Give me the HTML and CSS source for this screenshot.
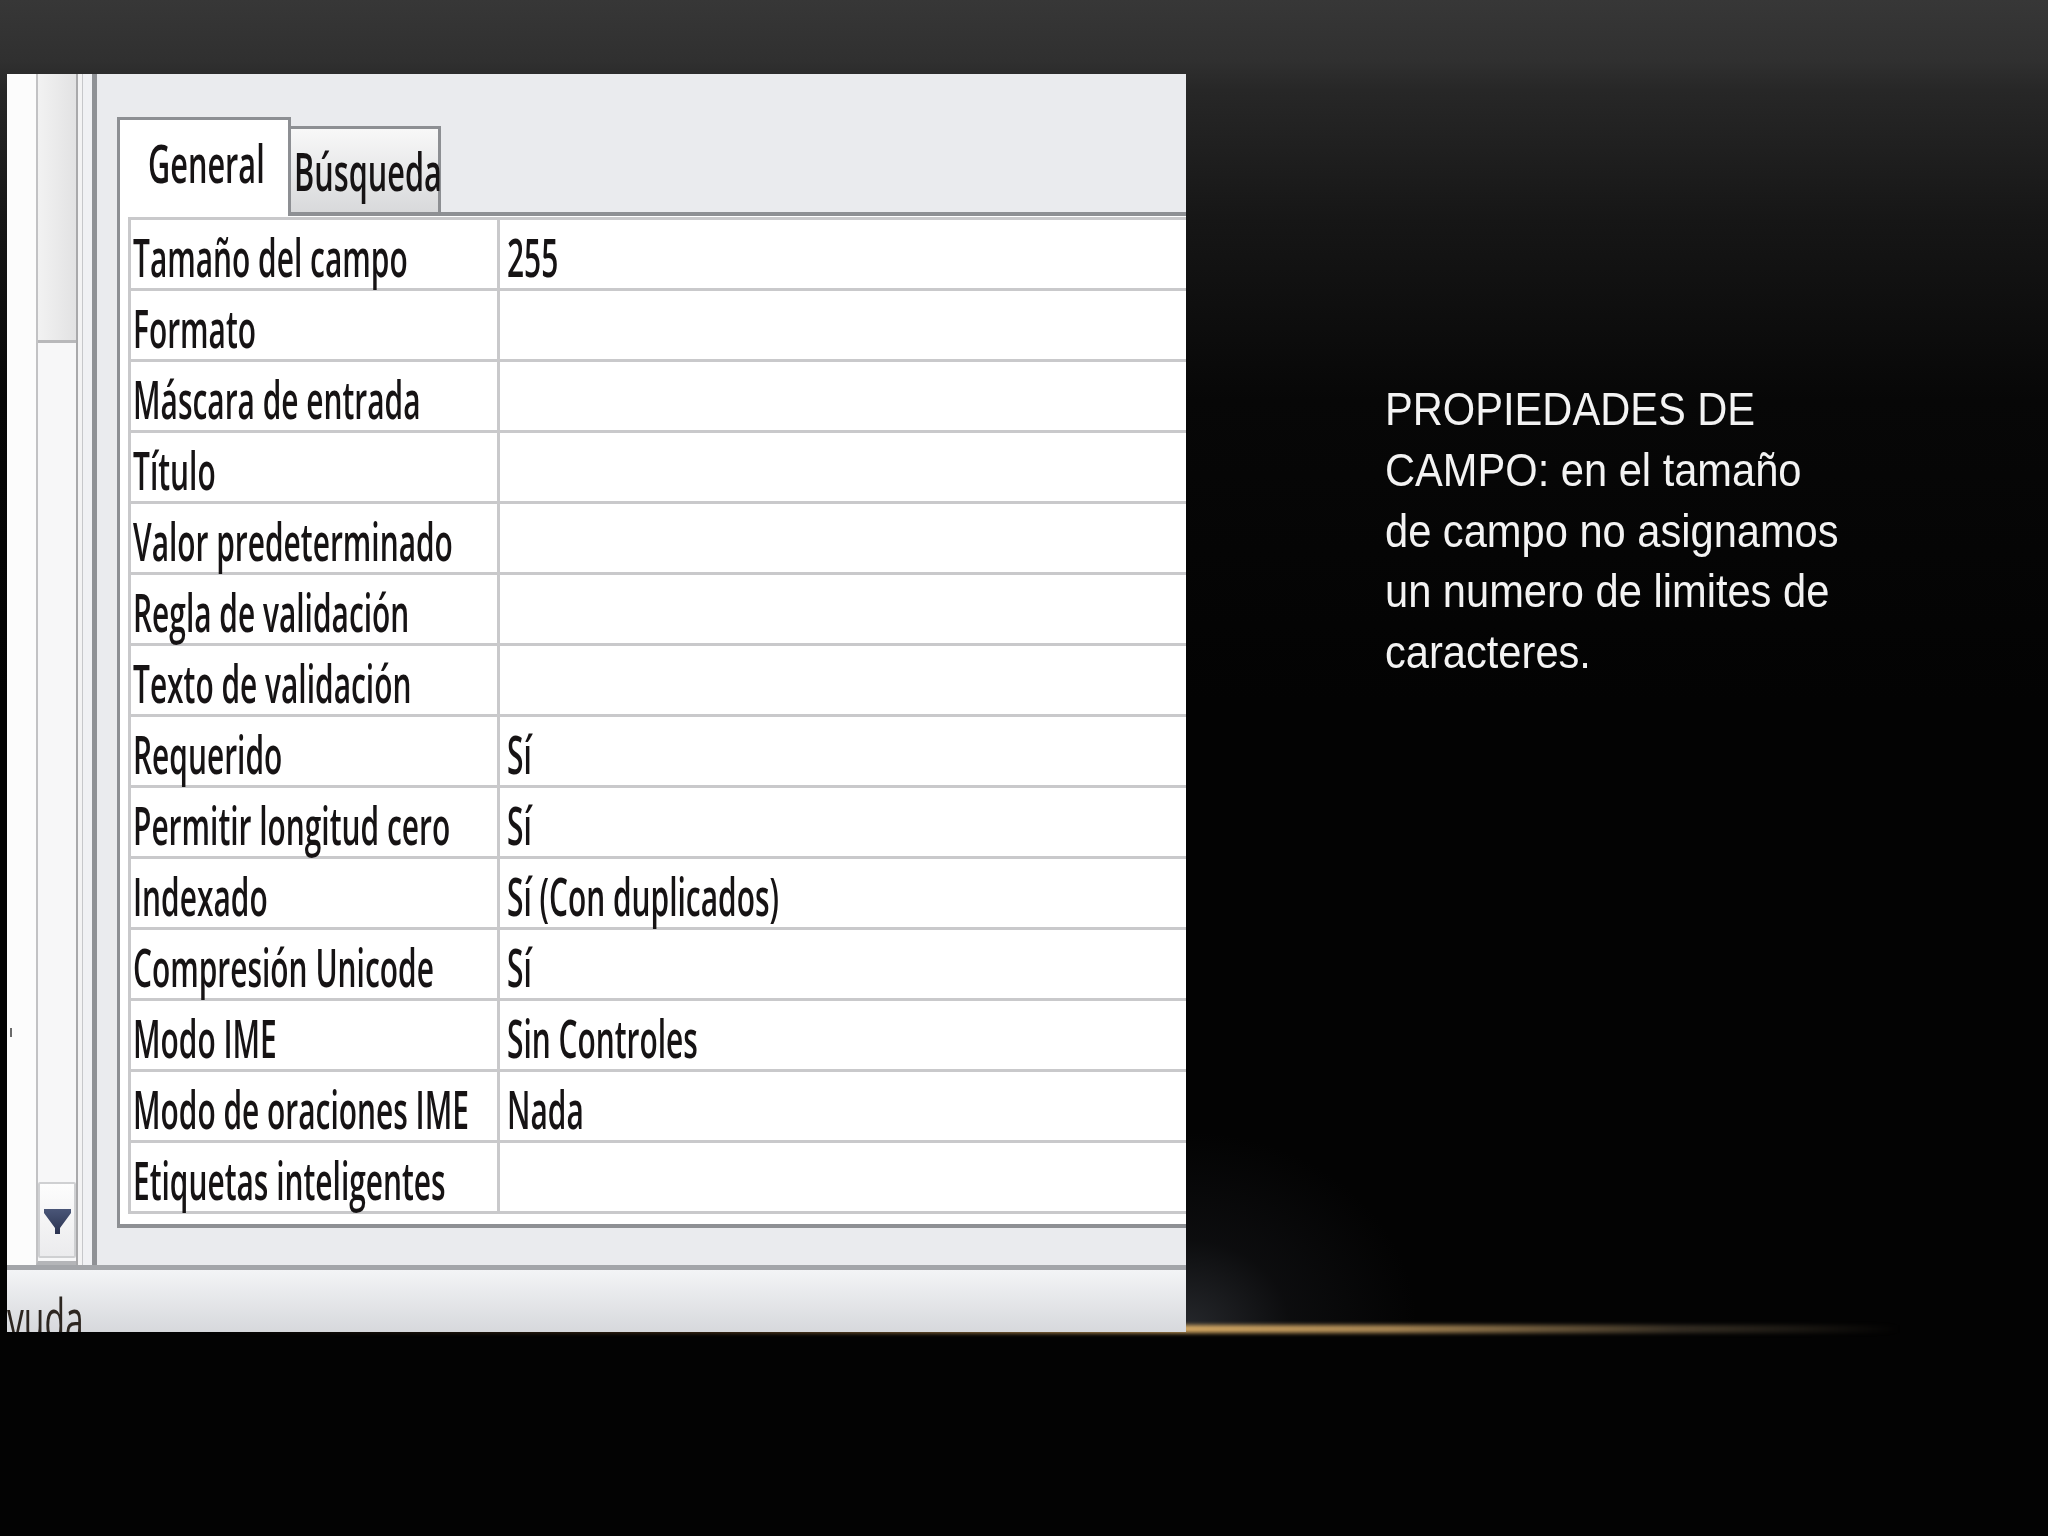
FILE: index.html
```html
<!DOCTYPE html>
<html lang="es">
<head>
<meta charset="utf-8">
<title>Propiedades de campo</title>
<link rel="stylesheet" href="styles.css">
</head>
<body>
<div class="slide">
  <div class="haze"></div>
  <div class="glow"></div>
  <div class="shot">
    <div class="main">
      <div class="gutter"><span class="tick"></span></div>
      <div class="vscroll">
        <div class="thumb"></div>
        <div class="track"></div>
        <div class="btn-down">
          <svg width="27" height="25" viewBox="0 0 27 25"><defs><linearGradient id="ag" x1="0" y1="0" x2="0" y2="1"><stop offset="0" stop-color="#4a5678"/><stop offset="1" stop-color="#2a3250"/></linearGradient></defs><polygon points="0,0 27,0 27,4 16,19 16,25 11,25 11,19 0,4" fill="url(#ag)"/></svg>
        </div>
      </div>
      <div class="divider"></div>
      <div class="content">
        <div class="tabstrip">
          <div class="tab active"><span class="t">General</span></div>
          <div class="tab inactive"><span class="t">Búsqueda</span></div>
          <div class="tabline"></div>
        </div>
        <div class="tabpanel">
          <div class="grid">
            <div class="cell lab"><span class="t">Tamaño del campo</span></div><div class="cell val"><span class="t">255</span></div>
            <div class="cell lab"><span class="t">Formato</span></div><div class="cell val"></div>
            <div class="cell lab"><span class="t">Máscara de entrada</span></div><div class="cell val"></div>
            <div class="cell lab"><span class="t">Título</span></div><div class="cell val"></div>
            <div class="cell lab"><span class="t">Valor predeterminado</span></div><div class="cell val"></div>
            <div class="cell lab"><span class="t">Regla de validación</span></div><div class="cell val"></div>
            <div class="cell lab"><span class="t">Texto de validación</span></div><div class="cell val"></div>
            <div class="cell lab"><span class="t">Requerido</span></div><div class="cell val"><span class="t">Sí</span></div>
            <div class="cell lab"><span class="t">Permitir longitud cero</span></div><div class="cell val"><span class="t">Sí</span></div>
            <div class="cell lab"><span class="t">Indexado</span></div><div class="cell val"><span class="t">Sí (Con duplicados)</span></div>
            <div class="cell lab"><span class="t">Compresión Unicode</span></div><div class="cell val"><span class="t">Sí</span></div>
            <div class="cell lab"><span class="t">Modo IME</span></div><div class="cell val"><span class="t">Sin Controles</span></div>
            <div class="cell lab"><span class="t">Modo de oraciones IME</span></div><div class="cell val"><span class="t">Nada</span></div>
            <div class="cell lab"><span class="t">Etiquetas inteligentes</span></div><div class="cell val"></div>
          </div>
        </div>
      </div>
    </div>
    <div class="status"><span class="t">yuda.</span></div>
  </div>
  <div class="caption">PROPIEDADES DE<br>CAMPO: en el tamaño<br>de campo no asignamos<br>un numero de limites de<br>caracteres.</div>
</div>
</body>
</html>
```
FILE: styles.css
```css
html, body {
  margin: 0;
  padding: 0;
  background: #030303;
}

.slide {
  position: relative;
  width: 2048px;
  height: 1536px;
  overflow: hidden;
  box-sizing: border-box;
  padding: 74px 0 0 7px;
  display: flex;
  align-items: flex-start;
  background: linear-gradient(to bottom, #373737 0px, #303030 60px, #272727 90px, #161616 220px, #070707 400px, #030303 700px, #030303 100%);
}

.haze {
  position: absolute;
  left: 1186px;
  top: 1110px;
  width: 420px;
  height: 218px;
  background: radial-gradient(ellipse 55% 90% at 0% 100%, rgba(72, 76, 84, 0.5) 0%, rgba(40, 42, 48, 0.25) 45%, rgba(0, 0, 0, 0) 100%);
  z-index: 0;
}

.glow {
  position: absolute;
  left: 200px;
  top: 1325px;
  width: 1700px;
  height: 8px;
  background: linear-gradient(to right, rgba(90, 60, 30, 0) 0%, rgba(120, 82, 42, 0.6) 30%, rgba(215, 170, 100, 1) 58%, rgba(200, 160, 100, 0.85) 70%, rgba(130, 112, 85, 0.4) 87%, rgba(80, 80, 80, 0) 100%);
  filter: blur(2px);
  z-index: 0;
}

.shot {
  position: relative;
  z-index: 1;
  width: 1179px;
  height: 1258px;
  flex: none;
  display: flex;
  flex-direction: column;
  overflow: hidden;
  background: #eaebee;
}

.main {
  height: 1191px;
  display: flex;
  flex: none;
}

.gutter {
  width: 29px;
  flex: none;
  background: #fcfcfc;
}

.tick {
  display: block;
  width: 2px;
  height: 9px;
  margin: 954px 0 0 3px;
  background: #6a6a6a;
}

.vscroll {
  width: 40px;
  flex: none;
  box-sizing: border-box;
  border-left: 2px solid #c2c2c4;
  border-bottom: 4px solid #b4b5b8;
  background: #f7f7f8;
  display: flex;
  flex-direction: column;
}

.thumb {
  height: 269px;
  box-sizing: border-box;
  border-bottom: 3px solid #b8b8ba;
  background: linear-gradient(to right, #f2f2f2, #e2e2e3);
}

.track {
  flex: 1;
}

.btn-down {
  height: 76px;
  margin-bottom: 3px;
  box-sizing: border-box;
  border: 2px solid #cfd0d2;
  border-radius: 2px;
  background: linear-gradient(to bottom, #fdfdfd, #ebebed);
  display: flex;
  align-items: center;
  justify-content: center;
}

.btn-down svg {
  display: block;
  margin-top: 2px;
}

.divider {
  width: 21px;
  flex: none;
  background: linear-gradient(to right, #a9a9ab 0px, #a9a9ab 2px, #f3f3f4 2px, #f3f3f4 6px, #c6c7ca 6px, #c6c7ca 7px, #f0f1f4 7px, #f0f1f4 16px, #8f9195 16px, #8f9195 21px);
}

.content {
  flex: 1;
  min-width: 0;
  padding: 43px 0 0 20px;
  background: #eaebee;
}

.t {
  display: inline-block;
  font-family: "Open Sans", "Noto Sans", sans-serif;
  font-weight: 600;
  font-size: 52px;
  line-height: normal;
  color: #161314;
  white-space: nowrap;
  transform: scaleX(0.575);
  transform-origin: 0 0;
}

.tabstrip {
  display: flex;
  align-items: flex-end;
  height: 99px;
}

.tab {
  box-sizing: border-box;
  flex: none;
}

.tab.active {
  width: 174px;
  height: 99px;
  border: 3px solid #8d8f93;
  border-bottom: 0;
  background: #ffffff;
  padding: 7px 0 0 28px;
}

.tab.active .t {
  transform: scaleX(0.59);
}

.tab.inactive {
  width: 150px;
  height: 90px;
  border-top: 3px solid #8d8f93;
  border-right: 3px solid #8d8f93;
  border-bottom: 4px solid #8e9094;
  background: linear-gradient(to bottom, #f8f8f8, #d8d9db);
  padding: 6px 0 0 3px;
}

.tab.inactive .t {
  transform: scaleX(0.59);
}

.tabline {
  flex: 1;
  height: 4px;
  background: #8e9094;
}

.tabpanel {
  background: #ffffff;
  border-left: 3px solid #8d8f93;
  border-bottom: 4px solid #8e9094;
  padding: 1px 0 10px 8px;
}

.grid {
  display: grid;
  grid-template-columns: 369px 1fr;
  border-top: 3px solid #c9c9cb;
  border-left: 3px solid #c9c9cb;
}

.cell {
  height: 68px;
  box-sizing: content-box;
  border-bottom: 3px solid #c9c9cb;
  white-space: nowrap;
  display: flex;
  align-items: flex-start;
}

.cell .t {
  margin-top: 1px;
}

.lab {
  border-right: 3px solid #c9c9cb;
  padding-left: 2px;
}

.val {
  padding-left: 7px;
}

.status {
  flex: none;
  height: 62px;
  border-top: 5px solid #a3a5a9;
  background: linear-gradient(to bottom, #f3f4f6, #d2d4d8);
  overflow: hidden;
  padding-top: 10px;
  box-sizing: content-box;
}

.status .t {
  color: #2d2620;
  font-weight: 400;
  font-size: 56px;
  transform: scaleX(0.6);
}

.caption {
  position: relative;
  z-index: 1;
  flex: none;
  margin: 305px 0 0 199px;
  font-family: "Liberation Sans", Arial, sans-serif;
  font-size: 46px;
  line-height: 60.8px;
  color: #f3f3f3;
  white-space: nowrap;
  transform: scaleX(0.905);
  transform-origin: 0 0;
}
```
